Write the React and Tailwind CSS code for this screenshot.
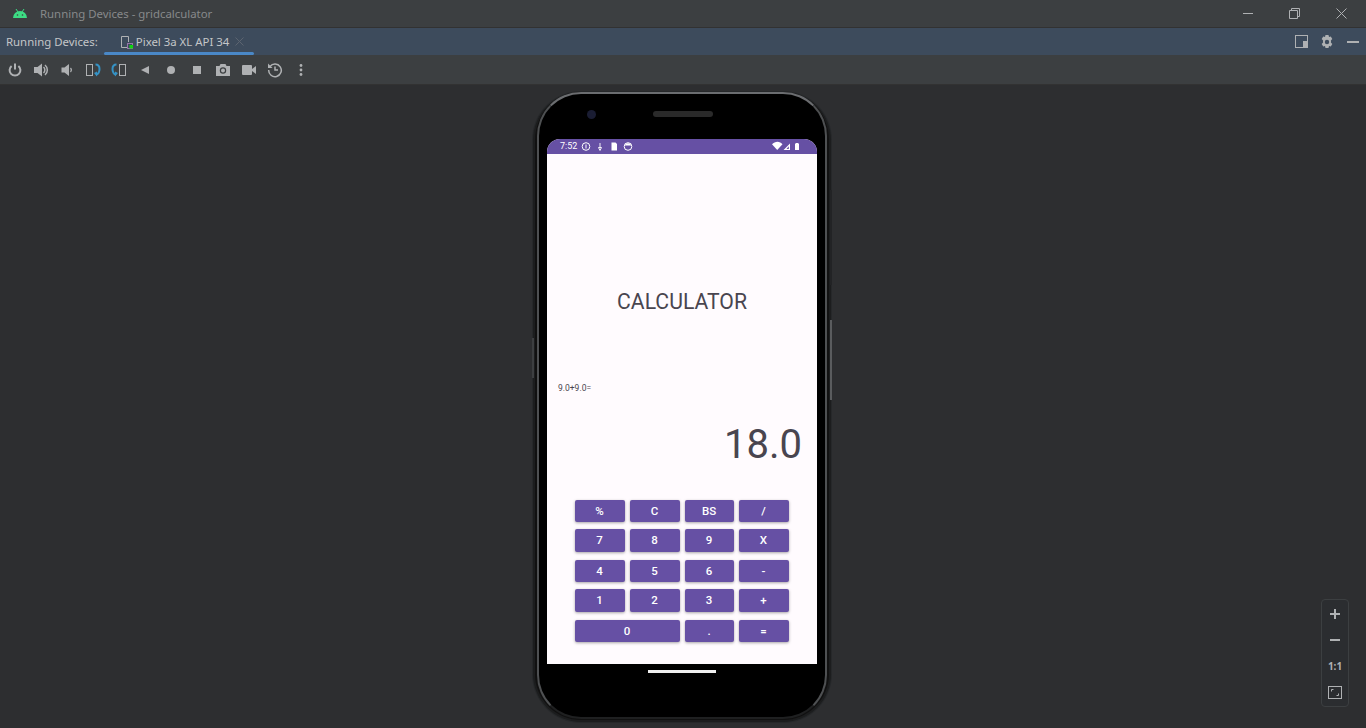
import React from "react";

const FONT = { fontFamily: '"Noto Sans", sans-serif' };

const KEYS = [
  { label: "%", h: "h-[22px]" },
  { label: "C", h: "h-[22px]" },
  { label: "BS", h: "h-[22px]" },
  { label: "/", h: "h-[22px]" },
  { label: "7", h: "h-[23px]" },
  { label: "8", h: "h-[23px]" },
  { label: "9", h: "h-[23px]" },
  { label: "X", h: "h-[23px]" },
  { label: "4", h: "h-[22px]" },
  { label: "5", h: "h-[22px]" },
  { label: "6", h: "h-[22px]" },
  { label: "-", h: "h-[22px]" },
  { label: "1", h: "h-[23px]" },
  { label: "2", h: "h-[23px]" },
  { label: "3", h: "h-[23px]" },
  { label: "+", h: "h-[23px]" },
  { label: "0", h: "h-[22px]", wide: true },
  { label: ".", h: "h-[22px]" },
  { label: "=", h: "h-[22px]" },
];

function Tool({ children }) {
  return (
    <div className="flex h-full w-[26px] items-center justify-center">
      <svg width="16" height="16" viewBox="0 0 16 16" fill="none">
        {children}
      </svg>
    </div>
  );
}

const G = "#afb1b3";
const B = "#3592c4";

function Toolbar() {
  return (
    <div className="flex h-[29px] bg-[#3c3f41] pl-[2px]">
      <Tool>
        <path d="M8 1.500v6" stroke={G} strokeWidth="2" />
        <path d="M4.600 4a5.400 5.400 0 1 0 6.800 0" stroke={G} strokeWidth="2" />
      </Tool>
      <Tool>
        <path d="M1 5h3.500L9 1.500v13L4.500 11H1z" fill={G} />
        <path d="M10.500 5a4 4 0 0 1 0 6" stroke={G} strokeWidth="1.500" />
        <path d="M12 3a6.500 6.500 0 0 1 0 10" stroke={G} strokeWidth="1.500" />
      </Tool>
      <Tool>
        <path d="M2.500 5.500h3L10 2v12l-4.500-3.500h-3z" fill={G} />
        <path d="M11.500 6a3 3 0 0 1 0 4" stroke={G} strokeWidth="1.200" />
      </Tool>
      <Tool>
        <rect x="1.500" y="2.500" width="6" height="11" stroke={G} />
        <path d="M10.500 2.500c3.500 0 4 2 4 4.500 0 3-1 5-3.500 6" stroke={B} strokeWidth="2" />
        <path d="M9 11l3 3.500v-5z" fill={B} />
      </Tool>
      <Tool>
        <rect x="8.500" y="2.500" width="6" height="11" stroke={G} />
        <path d="M5.500 2.500c-3.500 0-4 2-4 4.500 0 3 1 5 3.500 6" stroke={B} strokeWidth="2" />
        <path d="M7 11l-3 3.500v-5z" fill={B} />
      </Tool>
      <Tool>
        <path d="M12 4v8L4 8z" fill={G} />
      </Tool>
      <Tool>
        <circle cx="8" cy="8" r="4" fill={G} />
      </Tool>
      <Tool>
        <rect x="4" y="4" width="8" height="8" fill={G} />
      </Tool>
      <Tool>
        <path d="M1 4h3.500l1-2h5l1 2H15v10H1z" fill={G} />
        <circle cx="8" cy="8.500" r="3.200" fill="#3c3f41" />
        <circle cx="8" cy="8.500" r="2" fill={G} />
      </Tool>
      <Tool>
        <rect x="1" y="3" width="10" height="10" rx="1" fill={G} />
        <path d="M11 7l4-3v8l-4-3z" fill={G} />
      </Tool>
      <Tool>
        <path d="M3 4.500A6.300 6.300 0 1 1 1.700 8" stroke={G} strokeWidth="1.500" />
        <path d="M1 1.500v4.500h4.500z" fill={G} />
        <path d="M8 4.500V8h3" stroke={G} strokeWidth="1.500" />
      </Tool>
      <Tool>
        <circle cx="8" cy="3.500" r="1.400" fill={G} />
        <circle cx="8" cy="8" r="1.400" fill={G} />
        <circle cx="8" cy="12.500" r="1.400" fill={G} />
      </Tool>
    </div>
  );
}

function StatusBar() {
  return (
    <div className="flex h-[15px] items-center rounded-t-[13px] bg-[#6650a4] pl-[13px] pr-[17px] text-white">
      <span className="w-[19px] text-[9px] leading-none" style={{ fontFamily: "Roboto, sans-serif" }}>
        7:52
      </span>
      <svg width="64" height="11" viewBox="0 0 64 11" fill="none">
        <circle cx="7" cy="5.500" r="3.800" stroke="#fff" />
        <path d="M7 3.500v4" stroke="#fff" />
        <path d="M21 2v4.500M19.500 6.500h3L21 9.500z" stroke="#fff" strokeWidth="0.900" />
        <path d="M32.500 1.500h4l1.500 1.500v6.500h-5.500z" fill="#fff" />
        <circle cx="49" cy="5.500" r="3.800" stroke="#fff" />
        <path d="M45.500 4.500a3.800 3.800 0 0 1 7 0z" fill="#fff" />
      </svg>
      <svg className="ml-auto" width="28" height="11" viewBox="0 0 28 11">
        <path d="M0 3.200C3-.2 8-.2 10.500 3.200L5.200 9z" fill="#fff" />
        <path d="M18 2.500V9h-6.500zM16.800 5.300L14.500 7.900h2.300z" fill="#fff" fillRule="evenodd" />
        <path d="M23 2.500h1V2h2v.5h1V9h-4z" fill="#fff" />
      </svg>
    </div>
  );
}

function Screen() {
  return (
    <div
      className="flex h-[525px] w-[270px] flex-col rounded-t-[13px] bg-[#fffbfe]"
      style={{ fontFamily: "Roboto, sans-serif" }}
    >
      <StatusBar />
      <div className="mt-[135px] text-center text-[21.200px] leading-[26px] text-[#49454f]">CALCULATOR</div>
      <div className="mt-[67px] pl-[11px] text-[8.500px] leading-[12px] text-[#49454f]">9.0+9.0=</div>
      <div className="mt-[27px] pr-[15px] text-right text-[40px] leading-[48px] text-[#49454f]">18.0</div>
      <div className="ml-[28px] mt-[31px] grid w-[214px] grid-cols-[50px_50px_49px_50px] grid-rows-[29px_31px_29px_31px_22px] gap-x-[5px]">
        {KEYS.map((k) => (
          <div
            key={k.label}
            className={`flex items-center justify-center rounded-[2px] bg-[#6650a4] pr-[1px] pt-[1px] text-[11.500px] font-medium text-white shadow-[0_1px_3px_rgba(0,0,0,0.35)] ${k.h} ${k.wide ? "col-span-2" : ""}`}
          >
            {k.label}
          </div>
        ))}
      </div>
    </div>
  );
}

function Phone() {
  return (
    <div className="relative mr-[2px] mt-[7px] flex h-[630px] w-[298px] flex-col items-center rounded-[48px] border-[2px] border-[#1c1d1e] border-t-0 bg-[#111] px-[2px] pb-[1px] shadow-[0_0_0_1px_#26282a]">
      <div className="absolute -right-[3px] top-[98px] h-[95px] w-[2px] bg-[#222325]" />
      <div className="absolute -right-[3px] top-[228px] h-[80px] w-[2px] bg-[#5a5c5e]" />
      <div className="absolute -left-[3px] top-[246px] h-[40px] w-[2px] bg-[#3d3f41]" />
      <div className="flex h-full w-full flex-col items-center rounded-[44px] border-[2px] border-[#4e5052] border-b-[#1f2021] border-t-[#6b6d70] bg-black">
        <div className="relative h-[45px] w-full shrink-0">
          <div className="absolute left-[48px] top-[16px] h-[9px] w-[9px] rounded-full bg-[#1a1d33]" />
          <div className="absolute left-[114px] top-[17px] h-[6px] w-[60px] rounded-full bg-[#2a2a2a]" />
        </div>
        <Screen />
        <div className="mt-[6px] h-[3px] w-[68px] bg-[#f0f0f0]" />
      </div>
    </div>
  );
}

export default function App() {
  return (
    <div className="relative flex h-[728px] w-[1366px] flex-col overflow-hidden bg-[#2d2e30]" style={FONT}>
      <div className="flex h-[28px] items-center border-b border-[#323232] bg-[#3c3f41]">
        <svg className="ml-[13px]" width="14" height="9" viewBox="0 0 14 9">
          <path d="M0 9a7 7 0 0 1 14 0z" fill="#3ddc84" />
          <path d="M3 0l2 3M11 0L9 3" stroke="#3ddc84" />
          <circle cx="4.500" cy="6" r="0.800" fill="#3c3f41" />
          <circle cx="9.500" cy="6" r="0.800" fill="#3c3f41" />
        </svg>
        <span className="ml-[13px] pt-[1px] text-[11.400px] text-[#87898b]">Running Devices - gridcalculator</span>
        <div className="ml-auto flex h-full pr-[1px]">
          <div className="flex w-[47px] items-center justify-center">
            <div className="h-px w-[10px] bg-[#afb1b3]" />
          </div>
          <div className="flex w-[47px] items-center justify-center">
            <svg width="11" height="11" viewBox="0 0 11 11" fill="none">
              <path d="M.5 2.500h8v8h-8zM2.500 2.500v-2h8v8h-2" stroke="#afb1b3" />
            </svg>
          </div>
          <div className="flex w-[47px] items-center justify-center">
            <svg width="11" height="11" viewBox="0 0 11 11" fill="none">
              <path d="M.5.5l10 10M10.500.5l-10 10" stroke="#afb1b3" />
            </svg>
          </div>
        </div>
      </div>

      <div className="flex h-[27px] items-center bg-[#3d4b5c] text-[11.400px] text-[#c4c6c8]">
        <span className="ml-[6px] pt-[1px]">Running Devices:</span>
        <div className="relative ml-[6px] flex h-full w-[150px] items-center pl-[16px]">
          <svg width="14" height="16" viewBox="0 0 14 16" fill="none">
            <path d="M7 13.500H1.500v-11h7V8" stroke={G} />
            <rect x="7.500" y="9.500" width="5" height="5" stroke="#9876aa" />
            <rect x="9.500" y="11" width="3.500" height="3.500" fill="#11d411" />
          </svg>
          <span className="ml-[2px] pt-[1px]">Pixel 3a XL API 34</span>
          <svg className="ml-[6px]" width="9" height="9" viewBox="0 0 9 9" fill="none">
            <path d="M.5.5l8 8M8.500.5l-8 8" stroke="#5c6470" />
          </svg>
          <div className="absolute bottom-0 left-0 h-[3px] w-full rounded-full bg-[#4a88c7]" />
        </div>
        <div className="ml-auto flex items-center gap-[10px] pr-[7px]">
          <svg width="14" height="14" viewBox="0 0 14 14" fill="none">
            <rect x=".5" y=".5" width="12" height="12" stroke={G} />
            <rect x="8" y="6" width="5" height="7" fill={G} />
          </svg>
          <svg width="16" height="16" viewBox="0 0 16 16">
            <path
              fillRule="evenodd"
              d="M6.500 1h3l.5 2 1.800-.6 1.500 2.600-1.400 1.500.1 1-.1 1 1.400 1.500-1.500 2.600-1.800-.6-.5 2h-3l-.5-2-1.800.6-1.500-2.600 1.400-1.500-.1-1 .1-1L2.700 5l1.500-2.600 1.800.6zM8 5.800a2.200 2.200 0 1 0 0 4.400 2.200 2.200 0 0 0 0-4.400z"
              fill={G}
            />
          </svg>
          <div className="ml-[2px] h-[2px] w-[12px] bg-[#afb1b3]" />
        </div>
      </div>

      <Toolbar />

      <div className="flex flex-1 justify-center border-t border-[#323232]">
        <Phone />
      </div>

      {/* zoom controls float above the canvas */}
      <div className="absolute left-[1321px] top-[599px] flex h-[108px] w-[28px] flex-col items-center rounded-[4px] border border-[#3c3f41] bg-[#2b2d30] pt-[1px]">
        <div className="flex h-[26px] items-center">
          <svg width="12" height="12" viewBox="0 0 12 12">
            <path d="M6 1v10M1 6h10" stroke={G} strokeWidth="2" />
          </svg>
        </div>
        <div className="flex h-[26px] items-center">
          <div className="h-[2px] w-[10px] bg-[#afb1b3]" />
        </div>
        <div className="flex h-[26px] items-center text-[10px] font-bold text-[#afb1b3]">1:1</div>
        <div className="flex h-[26px] items-center">
          <svg width="14" height="13" viewBox="0 0 14 13" fill="none">
            <rect x=".5" y=".5" width="13" height="12" stroke={G} />
            <path d="M3.500 5.500v-2h2M10.500 7.500v2h-2" stroke={G} />
          </svg>
        </div>
      </div>
    </div>
  );
}
